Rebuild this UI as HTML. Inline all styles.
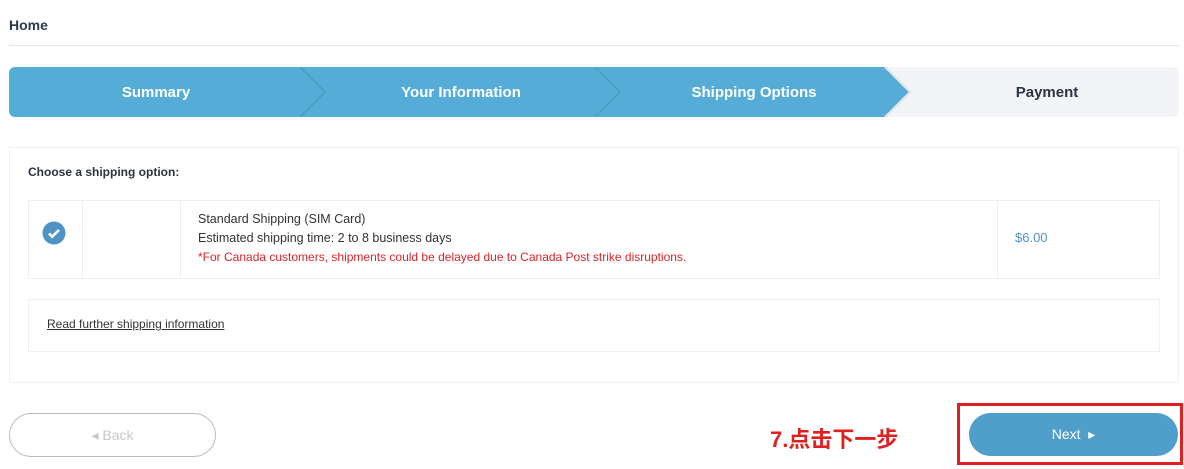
<!DOCTYPE html>
<html><head><meta charset="utf-8"><style>
body{margin:0;width:1184px;height:469px;background:#fff;font-family:"Liberation Sans",sans-serif;position:relative;overflow:hidden;color:#2b3440}
.a{position:absolute}
</style></head><body>
<div class="a" style="left:9px;top:17px;font-size:14px;font-weight:bold;color:#2d3a48">Home</div>
<div class="a" style="left:9px;top:45px;width:1170px;height:1px;background:#e6e6e6"></div>
<svg class="a" style="left:9px;top:67px" width="1170" height="50">
<defs><clipPath id="c"><rect width="1170" height="50" rx="6"/></clipPath></defs>
<g clip-path="url(#c)">
<rect width="1170" height="50" fill="#f2f4f7"/>
<polygon points="0,0 876,0 901,25 876,50 0,50" fill="#55acd6"/>
<polyline points="291,0 316,25 291,50" fill="none" stroke="#4a9bc4" stroke-width="1.5"/>
<polyline points="586,0 611,25 586,50" fill="none" stroke="#4a9bc4" stroke-width="1.5"/>
<polyline points="876,0 901,25 876,50" fill="none" stroke="#dfe4ea" stroke-width="2"/>
</g>
<g font-size="15" font-weight="bold" text-anchor="middle" font-family="Liberation Sans">
<text x="147" y="30" fill="#fff">Summary</text>
<text x="452" y="30" fill="#fff">Your Information</text>
<text x="745" y="30" fill="#fff">Shipping Options</text>
<text x="1038" y="30" fill="#2b3440">Payment</text>
</g></svg>
<div class="a" style="left:9px;top:147px;width:1168px;height:234px;border:1px solid #f0f0f0"></div>
<div class="a" style="left:28px;top:165px;font-size:12px;font-weight:bold;color:#2b3440">Choose a shipping option:</div>
<div class="a" style="left:28px;top:200px;width:1130px;height:77px;border:1px solid #eee"></div>
<div class="a" style="left:82px;top:201px;width:1px;height:77px;background:#eee"></div>
<div class="a" style="left:180px;top:201px;width:1px;height:77px;background:#eee"></div>
<div class="a" style="left:997px;top:201px;width:1px;height:77px;background:#eee"></div>
<svg class="a" style="left:42px;top:221px" width="24" height="24"><circle cx="12" cy="12" r="11.5" fill="#4f93c4"/><path d="M7 12.5l3.2 3.2L17 9" fill="none" stroke="#fff" stroke-width="2.6"/></svg>
<div class="a" style="left:198px;top:210px;font-size:12.5px;line-height:19px;color:#333">Standard Shipping (SIM Card)<br>Estimated shipping time: 2 to 8 business days<br><span style="color:#d9242a;font-size:12px">*For Canada customers, shipments could be delayed due to Canada Post strike disruptions.</span></div>
<div class="a" style="left:1015px;top:230px;font-size:13px;color:#4f93c4">$6.00</div>
<div class="a" style="left:28px;top:299px;width:1130px;height:51px;border:1px solid #f0f0f0"></div>
<div class="a" style="left:47px;top:317px;font-size:12px;color:#333;text-decoration:underline">Read further shipping information</div>
<div class="a" style="left:9px;top:413px;width:205px;height:42px;border:1px solid #bbb;border-radius:22px;text-align:center;line-height:42px;font-size:14px;color:#c8c8c8">◂ Back</div>
<div class="a" style="left:770px;top:427px;font-size:22px;font-weight:bold;color:#e02020;font-family:'Liberation Sans','Noto Sans CJK SC',sans-serif;line-height:26px">7.点击下一步</div>
<div class="a" style="left:957px;top:403px;width:220px;height:56px;border:3px solid #e02020"></div>
<div class="a" style="left:969px;top:413px;width:209px;height:43px;background:#4f9fca;border-radius:22px;text-align:center;line-height:43px;font-size:14px;color:#fff">Next &nbsp;▸</div>
</body></html>
